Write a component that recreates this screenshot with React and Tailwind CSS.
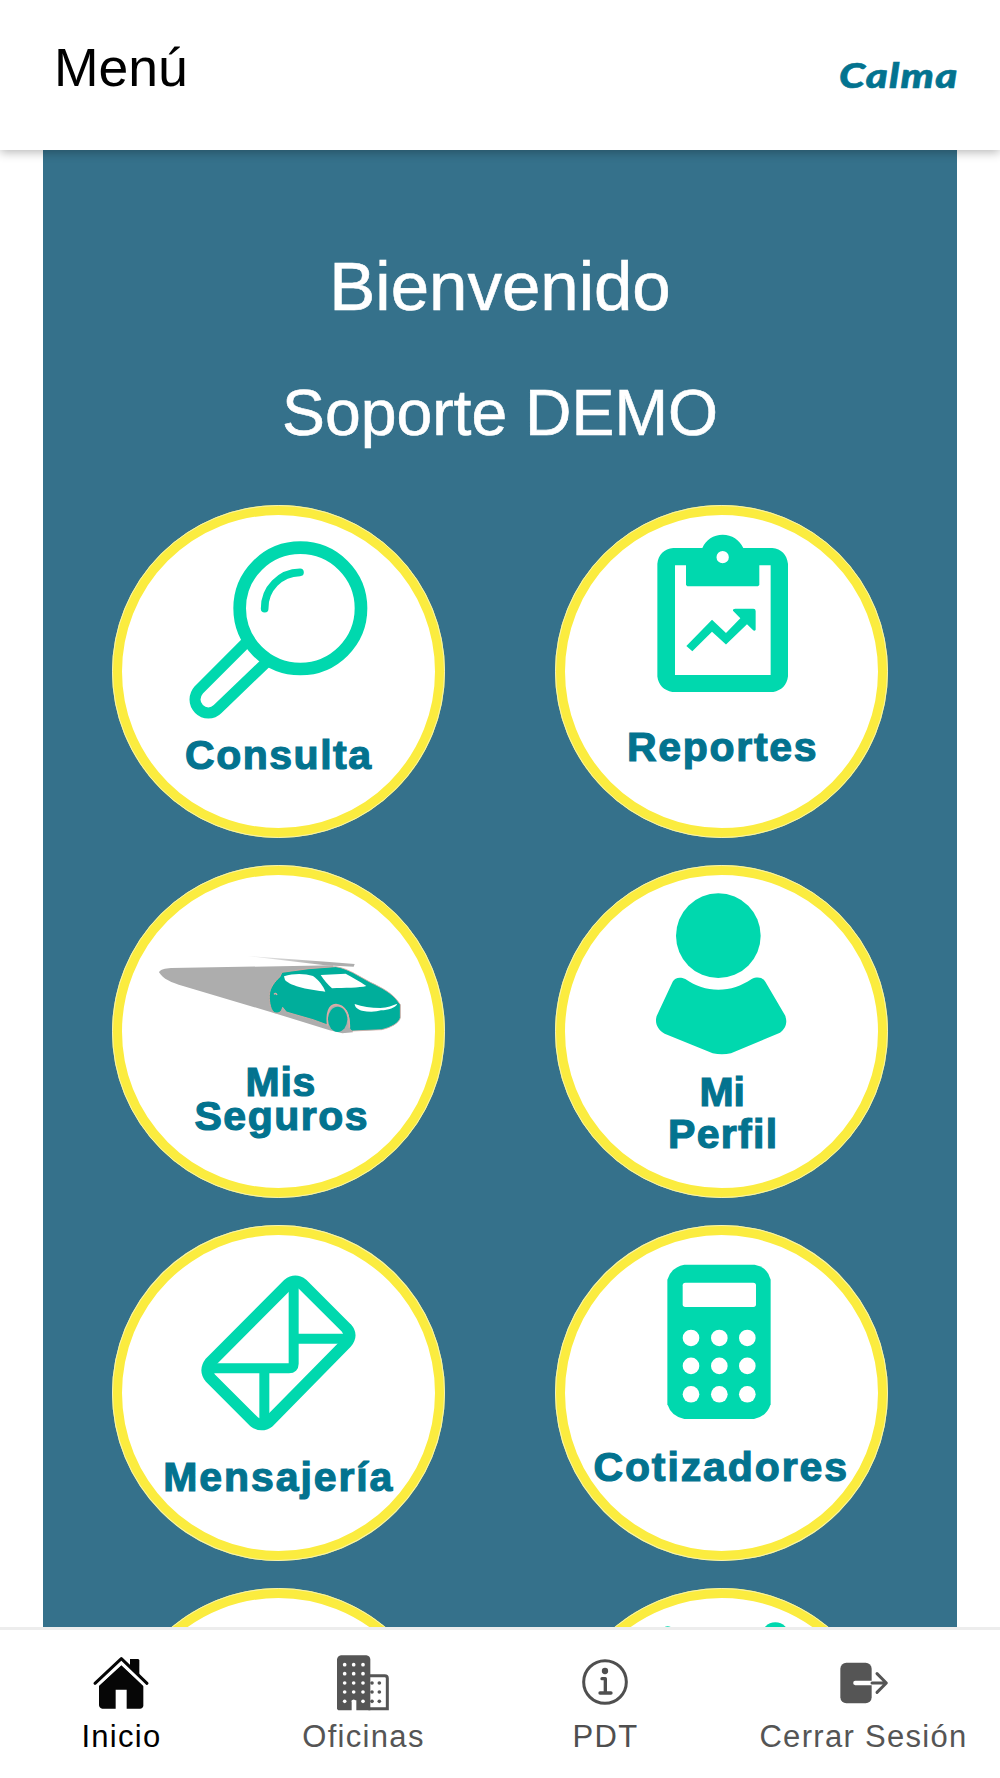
import React from 'react';

function ConsultaIcon() {
  return (
    <svg viewBox="67 58 939 660" className="w-[313px] h-[220px] shrink-0" fill="none" stroke="#00d8ae">
      <circle cx="602" cy="338" r="182" strokeWidth="38" />
      <path d="M495 339 A107 107 0 0 1 601 230" strokeWidth="23" strokeLinecap="round" />
      <path d="M439 441 L298 582 C282 600 282 624 298 640 C314 656 338 656 354 640 L501 499" strokeWidth="33" />
    </svg>
  );
}

function ReportesIcon() {
  return (
    <svg viewBox="75 58 939 635" className="w-[313px] h-[211.6px] shrink-0" fill="#00d8ae">
      <path
        fillRule="evenodd"
        d="M400 157 H487 C498 132 520 117 548 117 C576 117 598 132 610 157 H697 C724 160 741 177 744 204 V543 C741 569 724 585 700 589 H397 C372 585 355 569 352 543 V204 C355 177 372 160 400 157 Z M405 209 V538 H692 V209 H658 V268 L654 272 H442 L438 268 V209 Z M548 166 A18.500 18.500 0 1 0 548 203 A18.500 18.500 0 1 0 548 166 Z"
      />
      <path d="M439 451 L516 372 L558 412 L601 368 L579 345 Q578 339 586 339 H640 Q647 339 647 346 V402 Q644 408 638 402 L621 386 L558 447 L516 408 L457 467 Z" />
    </svg>
  );
}

function SegurosIcon() {
  return (
    <svg viewBox="67 58 939 570" className="w-[313px] h-[190px] shrink-0">
      <defs>
        <linearGradient id="estela" x1="0" x2="1">
          <stop offset="0" stopColor="#adadad" stopOpacity="0.2" />
          <stop offset="0.7" stopColor="#adadad" />
        </linearGradient>
      </defs>
      {/* sombra */}
      <path d="M445 301 L690 319 L765 325 L762 333 L676 329 Z" fill="url(#estela)" />
      <path d="M178 350 C182 341 196 338 214 337 L700 329 L760 530 L728 533 L690 524 L520 471 L250 391 C215 381 190 370 178 350 Z" fill="#adadad" />
      {/* auto */}
      <path
        d="M547 350 L628 339 L708 333 C730 336 745 344 758 350 L812 380 C848 397 876 412 894 436 L902 447 V486 C898 502 875 515 846 522 L757 526 C749 521 748 515 748 500 C749 468 733 447 709 449 C686 452 681 478 684 508 L640 492 L560 469 L549 455 C545 470 537 474 525 471 C513 465 509 442 509 420 C510 394 526 378 541 363 Z"
        fill="#00ae9b"
        stroke="#dcaaa5"
        strokeWidth="2.500"
      />
      <path d="M553 362 C582 352 616 353 640 361 C656 372 671 391 677 408 C634 403 574 393 556 373 Z" fill="#fff" />
      <path d="M663 358 L738 354 C758 365 779 376 800 391 C780 397 733 396 697 398 C684 387 672 372 663 358 Z" fill="#fff" />
      <path d="M765 445 C788 453 813 457 842 457 C863 456 880 449 893 444 C888 456 866 463 844 464 C830 469 807 470 787 465 C773 461 766 455 765 445 Z" fill="#fff" />
      <path d="M757 526 C747 520 748 510 748 494 C746 465 731 448 709 449 C688 451 682 475 685 505 C691 526 707 530 757 526 Z" fill="#adadad" />
      <path d="M684 510 C680 471 687 449 709 447 C735 449 750 475 749 516" fill="none" stroke="#dcaaa5" strokeWidth="5" />
      <ellipse cx="714" cy="491" rx="29" ry="38" fill="#00ae9b" />
      <path d="M523 416 Q528 410 532 418" fill="none" stroke="#dcaaa5" strokeWidth="4" />
    </svg>
  );
}

function PerfilIcon() {
  return (
    <svg viewBox="75 58 939 589" className="w-[313px] h-[196.400px] shrink-0" fill="#00d8ae">
      <circle cx="535" cy="240" r="127" />
      <path d="M398 378 C405 366 419 362 436 370 C467 392 499 402 535 402 C572 402 604 391 635 370 C652 362 668 365 676 378 L735 479 C743 497 739 518 720 531 L573 593 Q546 599 518 593 L374 534 C354 523 343 503 350 481 Z" />
    </svg>
  );
}

function MensajeriaIcon() {
  return (
    <svg viewBox="67 58 939 666" className="w-[313px] h-[222px] shrink-0" fill="none" stroke="#00d8ae" strokeLinejoin="round">
      <path d="M565 206 Q587 189 609 206 L740 337 Q759 358 740 382 L508 618 Q486 634 463 618 L332 487 Q314 464 332 440 Z" strokeWidth="35" />
      <path d="M582 200 V444 Q582 458 568 458 H325" strokeWidth="30" />
      <path d="M582 369 H745 M494 458 V625" strokeWidth="30" />
    </svg>
  );
}

function CotizadoresIcon() {
  const xs = [453, 538, 622];
  const ys = [367, 451, 536];
  return (
    <svg viewBox="75 58 939 635" className="w-[313px] h-[211.600px] shrink-0" fill="#fff">
      <path d="M433 147 H644 Q682 153 692 192 V566 Q680 603 642 610 H433 Q394 603 382 566 V192 Q393 155 433 147 Z" fill="#00d8ae" />
      <rect x="428" y="201" width="220" height="73" rx="8" />
      {ys.map((y) => xs.map((x) => <circle key={`${x}-${y}`} cx={x} cy={y} r="25" />))}
    </svg>
  );
}

function ExtraIcon() {
  return (
    <svg viewBox="194 80 939 635" className="w-[313px] h-[211.600px] shrink-0" fill="#00d8ae">
      <circle cx="502" cy="186" r="21" />
      <circle cx="825" cy="195" r="42" />
    </svg>
  );
}

function Tile({ icon, children, className = '' }) {
  return (
    <button
      className={`flex w-[333px] flex-col items-center overflow-hidden rounded-[50%] border-10 border-[#fbec3f] bg-white text-[41px] font-bold text-[#03738f] outline-1 -outline-offset-1 outline-[#f6f2b0] [-webkit-text-stroke:1.200px_#03738f] ${className}`}
    >
      {icon}
      {children}
    </button>
  );
}

function InicioIcon() {
  return (
    <svg viewBox="270 250 180 180" className="size-[60px]" fill="#060606">
      <path d="M387 268 H412 L415 271 V316 L387 290 Z" />
      <path d="M361 287 L427 348 V408 Q426 416 417 417 H377 V360 H344 V417 H304 Q295 416 294 407 V348 Z" />
      <path d="M286 350 L361 279 L434 350" fill="none" stroke="#fff" strokeWidth="8" />
      <path d="M282 341 L361 267 L438 341" fill="none" stroke="#060606" strokeWidth="9" strokeLinecap="round" strokeLinejoin="round" />
    </svg>
  );
}

function OficinasIcon() {
  const rows = [285, 312, 340, 367, 395];
  return (
    <svg viewBox="998 250 180 180" className="size-[60px]" fill="#555">
      <path d="M1104 318 H1153 Q1161 318 1161 326 V417 H1104" fill="none" stroke="#555" strokeWidth="9" />
      <path d="M1022 257 H1098 Q1109 259 1110 269 V422 H1068 V392 H1054 V422 H1014 L1010 418 V269 Q1012 259 1022 257 Z" />
      {rows.map((y) =>
        [1033, 1060, 1088].map((x) => <circle key={`${x}-${y}`} cx={x} cy={y} r="5.5" fill="#fff" />)
      )}
      {rows.slice(2).map((y) =>
        [1115, 1137].map((x) => <circle key={`${x}-${y}`} cx={x} cy={y} r="5.5" />)
      )}
    </svg>
  );
}

function PdtIcon() {
  return (
    <svg viewBox="223 250 180 180" className="size-[60px]" fill="none" stroke="#4f4f4f" strokeWidth="9">
      <circle cx="313" cy="337" r="64" />
      <circle cx="313" cy="304" r="9.500" fill="#4f4f4f" stroke="none" />
      <path d="M304 327 H314 V369 M298 370 H331" strokeWidth="10" strokeLinecap="round" strokeLinejoin="round" />
    </svg>
  );
}

function SalirIcon() {
  return (
    <svg viewBox="998 250 180 180" className="size-[60px]">
      <rect x="1020" y="279" width="94" height="122" rx="18" fill="#555" />
      <path d="M1065 340 H1116" stroke="#fff" strokeWidth="13" strokeLinecap="round" />
      <path d="M1115 340 H1156 M1130 312 L1158 340 L1130 368" fill="none" stroke="#555" strokeWidth="9" strokeLinecap="round" strokeLinejoin="round" />
    </svg>
  );
}

const navItems = [
  { label: 'Inicio', icon: <InicioIcon />, color: 'text-black' },
  { label: 'Oficinas', icon: <OficinasIcon />, color: 'text-[#555]' },
  { label: 'PDT', icon: <PdtIcon />, color: 'text-[#4f4f4f]' },
  { label: 'Cerrar Sesión', icon: <SalirIcon />, color: 'text-[#555]' },
];

export default function App() {
  return (
    <div className="flex h-[1778px] w-[1000px] flex-col overflow-hidden bg-white font-['Liberation_Sans',Arial,sans-serif]">
      <header className="relative z-10 flex h-[150px] shrink-0 items-start justify-between bg-white pr-[42px] pl-[54px] shadow-[0_2px_10px_rgba(0,0,0,0.3)]">
        <h1 className="pt-[38px] text-[53.500px] leading-[60px] text-black">Menú</h1>
        <span className="origin-right scale-x-[1.2] pt-[54px] font-['Lato'] text-[35px] leading-[40px] font-black tracking-[1px] text-[#03738f] italic [-webkit-text-stroke:0.600px_#03738f]">
          Calma
        </span>
      </header>

      <main className="mx-[43px] min-h-0 flex-1 overflow-hidden bg-[#35718b] pt-[97px]">
        <div className="text-center text-white [-webkit-text-stroke:0.600px_white]">
          <h2 className="text-[69px] leading-[80px]">Bienvenido</h2>
          <h3 className="mt-[48px] text-[64.300px] leading-[76px]">Soporte DEMO</h3>
        </div>

        <div className="mt-[54px] grid grid-cols-[333px_333px] justify-center gap-x-[109.400px] gap-y-[27px]">
          <Tile icon={<ConsultaIcon />} className="h-[333px]">
            <span className="leading-[40px] tracking-[1.500px]">Consulta</span>
          </Tile>
          <Tile icon={<ReportesIcon />} className="h-[333px]">
            <span className="pl-[3px] leading-[40px] tracking-[1.700px]">Reportes</span>
          </Tile>
          <Tile icon={<SegurosIcon />} className="h-[333px]">
            <span className="pl-[4px] leading-[34px] tracking-[0.700px]">Mis</span>
            <span className="pl-[6px] leading-[34px] tracking-[1.500px]">Seguros</span>
          </Tile>
          <Tile icon={<PerfilIcon />} className="h-[333px]">
            <span className="pl-[2px] leading-[42px]">Mi</span>
            <span className="pl-[4px] leading-[42px] tracking-[1.300px]">Perfil</span>
          </Tile>
          <Tile icon={<MensajeriaIcon />} className="h-[336px]">
            <span className="leading-[40px] tracking-[1.900px]">Mensajería</span>
          </Tile>
          <Tile icon={<CotizadoresIcon />} className="h-[336px]">
            <span className="leading-[40px] tracking-[1.900px]">Cotizadores</span>
          </Tile>
          <Tile className="h-[333px]" />
          <Tile icon={<ExtraIcon />} className="h-[333px]" />
        </div>
      </main>

      <nav className="grid h-[151px] shrink-0 grid-cols-[241px_243px_241px_275px] border-t-3 border-[#ededed] bg-white pt-[23.300px]">
        {navItems.map((item) => (
          <a key={item.label} className={`flex flex-col items-center ${item.color}`}>
            {item.icon}
            <span className="mt-[6px] pl-[2px] text-[31px] leading-[36px] tracking-[1.300px] whitespace-nowrap">{item.label}</span>
          </a>
        ))}
      </nav>
    </div>
  );
}
